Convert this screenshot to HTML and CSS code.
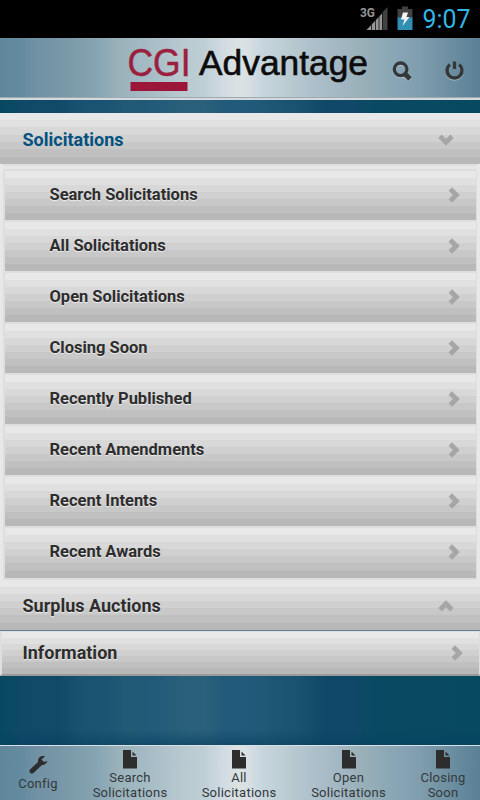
FILE: index.html
```html
<!DOCTYPE html>
<html lang="en">
<head>
<meta charset="utf-8">
<title>CGI Advantage</title>
<link rel="stylesheet" href="styles.css">
</head>
<body>
<svg class="defs" width="0" height="0">
  <symbol id="chev" viewBox="0 0 18 18"><path d="M5.300 3L11.300 9L5.300 15" fill="none" stroke="#a6a6a6" stroke-width="4.900"/></symbol>
  <symbol id="doc" viewBox="0 0 14 19"><path d="M0 0H8V7H14V18.500H0Z" fill="#2d2d2d"/><path d="M9.500 1.500L13.500 5.500H9.500Z" fill="#2d2d2d"/></symbol>
</svg>
<div class="status">
  <svg width="130" height="38" viewBox="350 0 130 38">
    <text x="360" y="17" class="net" textLength="15" lengthAdjust="spacingAndGlyphs">3G</text>
    <path d="M366.500 30L382 13.500V30Z" fill="#969696"/>
    <path d="M382 13L387.500 7V30H382Z" fill="#414141"/>
    <path d="M371.500 22V30M375.500 18V30M379 15V30M382.500 11V30" stroke="#111" stroke-width=".8"/>
    <path d="M402 6.500H408V9H412.500V18H397.500V9H402Z" fill="#414141"/>
    <path d="M397.500 17.500H412.500V30H397.500Z" fill="#308fb3"/>
    <path d="M403 12.500H408L406.500 17H409.500L402.500 26L404.500 19.500H401Z" fill="#f4f4f4"/>
    <text x="422.500" y="28" class="clock" textLength="48" lengthAdjust="spacingAndGlyphs">9:07</text>
  </svg>
</div>
<header class="bar header">
  <svg width="480" height="60" viewBox="0 38 480 60">
    <text x="127.500" y="75.700" class="cgi" textLength="63" lengthAdjust="spacingAndGlyphs">CGI</text>
    <rect x="130.500" y="82" width="57" height="9" fill="#9b1638"/>
    <text x="199" y="75.300" class="adv" textLength="169" lengthAdjust="spacingAndGlyphs">Advantage</text>
    <g fill="none" stroke="#d0d8dc" stroke-opacity=".55" transform="translate(0 1)">
      <circle cx="400.600" cy="69.300" r="6.300" stroke-width="3.300"/><path d="M405 74L410 79" stroke-width="4.800"/>
      <path d="M450 64.600A7.500 7.500 0 1 0 459 64.600" stroke-width="3.500"/>
    </g>
    <g fill="none" stroke="#34383b">
      <circle cx="400.600" cy="69.300" r="6.300" stroke-width="3.300"/><path d="M405 74L410 79" stroke-width="4.800"/>
      <path d="M450 64.600A7.500 7.500 0 1 0 459 64.600" stroke-width="3.500"/><path d="M454.500 61.500V69" stroke-width="3.300"/>
    </g>
  </svg>
</header>
<main>
  <div class="band section open"><span>Solicitations</span><svg class="chev down"><use href="#chev"/></svg></div>
  <div class="panel">
    <div class="band row"><span>Search Solicitations</span><svg class="chev"><use href="#chev"/></svg></div>
    <div class="band row"><span>All Solicitations</span><svg class="chev"><use href="#chev"/></svg></div>
    <div class="band row"><span>Open Solicitations</span><svg class="chev"><use href="#chev"/></svg></div>
    <div class="band row"><span>Closing Soon</span><svg class="chev"><use href="#chev"/></svg></div>
    <div class="band row"><span>Recently Published</span><svg class="chev"><use href="#chev"/></svg></div>
    <div class="band row"><span>Recent Amendments</span><svg class="chev"><use href="#chev"/></svg></div>
    <div class="band row"><span>Recent Intents</span><svg class="chev"><use href="#chev"/></svg></div>
    <div class="band row"><span>Recent Awards</span><svg class="chev"><use href="#chev"/></svg></div>
  </div>
  <div class="band section surplus"><span>Surplus Auctions</span><svg class="chev up"><use href="#chev"/></svg></div>
  <div class="band section info"><span>Information</span><svg class="chev"><use href="#chev"/></svg></div>
</main>
<footer class="bar footer">
  <div class="tab config">
    <svg width="20" height="20" viewBox="0 0 20 20"><path d="M4 16L12 8.500" stroke="#2d2d2d" stroke-width="5" stroke-linecap="round"/><path d="M17 1.500C13 0 9.500 3 10 7C11 11.500 18 11 19.500 6L16 7L13.500 4.500Z" fill="#2d2d2d"/></svg>
    <span>Config</span>
  </div>
  <div class="tab"><svg class="doc"><use href="#doc"/></svg><span>Search<br>Solicitations</span></div>
  <div class="tab"><svg class="doc"><use href="#doc"/></svg><span>All<br>Solicitations</span></div>
  <div class="tab"><svg class="doc"><use href="#doc"/></svg><span>Open<br>Solicitations</span></div>
  <div class="tab"><svg class="doc"><use href="#doc"/></svg><span>Closing<br>Soon</span></div>
</footer>
</body>
</html>
```
FILE: styles.css
```css
* { box-sizing: border-box; }
body {
  margin: 0;
  width: 480px;
  height: 800px;
  overflow: hidden;
  display: flex;
  flex-direction: column;
  font-family: Roboto, sans-serif;
  color: #2d2d2d;
  background:
    linear-gradient(#06416000 0, #06416000 730px, #06416099 745px),
    linear-gradient(90deg, #074961 0, #0a4a63 12px, #104868 22px, #114a69 60px, #175270 80px, #1b5573 112px, #205a74 125px, #225a7a 155px, #285f7a 180px, #2a6079 205px, #225a7a 222px, #205a7a 255px, #1c5572 280px, #175270 300px, #104868 325px, #0f4869 355px, #094a62 375px, #074961 480px);
}
.defs { position: absolute; }
svg { display: block; flex: none; }
.status { height: 38px; background: #000; display: flex; justify-content: flex-end; }
.net { font: bold 12.500px Roboto, sans-serif; fill: #969696; }
.clock { font: 25px Roboto, sans-serif; fill: #33b5e5; }
.bar {
  background: linear-gradient(90deg, #5f8799 0, #658ba0 22px, #7292a4 38px, #7898a8 60px, #829fad 85px, #88a6b5 100px, #9ab2b9 118px, #9fb6c0 132px, #a9bec7 155px, #b7c8cf 180px, #bfcfd5 205px, #d0dae3 222px, #dbe2e1 238px, #d9e0e5 247px, #c7d6de 262px, #bdced4 282px, #afc1cb 310px, #a2b7c3 340px, #99b0b8 362px, #88a6b5 395px, #7f9dac 420px, #7494a5 440px, #698c9f 455px, #5a8196 480px);
}
.header { height: 62px; border-bottom: 2px solid #d5d9db; box-shadow: inset 0 -1px #9aa9b2; }
.cgi { font: 38px "Liberation Sans", sans-serif; fill: #9b1f3e; stroke: #9b1f3e; stroke-width: .5; }
.adv { font: 35px "Liberation Sans", sans-serif; fill: #0c0c0c; stroke: #0c0c0c; stroke-width: .6; }
main { padding-top: 13px; flex: 1; }
.band {
  display: flex;
  align-items: center;
  justify-content: space-between;
  background: linear-gradient(#e8e8e8 14%, #e0e0e0 0 28%, #d8d8d8 0 43%, #d0d0d0 0 57%, #c8c8c8 0 71%, #c0c0c0 0 86%, #b8b8b8 0);
  font-weight: bold;
  text-shadow: 0 1px 1px #eee;
}
.section { height: 51px; padding: 2px 25px 0 22.500px; font-size: 18px; }
.open span { color: #03517f; text-shadow: none; }
.chev { width: 18px; height: 18px; }
.down { transform: rotate(90deg); }
.up { transform: rotate(-90deg); }
.panel {
  padding: 7px 4px 2px 5px;
  display: grid;
  gap: 2px;
  background: linear-gradient(#dedede 2px, #e8e8e8 2px 5px, #dedede 5px);
  box-shadow: inset 3px 0 #e8e8e8, inset -3px 0 #e8e8e8;
}
.row { height: 49px; padding: 0 13px 2px 44.500px; font-size: 16.500px; }
.row span { letter-spacing: -.01px; }
.row:last-child { height: 50px; padding-bottom: 3px; }
.surplus { height: 51px; padding-top: 1px; border-bottom: 1px solid #5d8296; background-clip: padding-box; }
.info {
  height: 45px;
  padding: 0 13px 1px 20.500px;
  border: solid #dedede;
  border-width: 1px 1px 2px 2px;
  border-bottom-color: #9b9b9b;
}
.footer {
  height: 55px;
  border-top: 1px solid #dce0e3;
  display: grid;
  grid-template-columns: 76px 108px 110px 109px 80px;
  font-size: 13px;
  line-height: 15px;
  letter-spacing: .25px;
  text-align: center;
  color: #33393c;
}
.tab { display: flex; flex-direction: column; align-items: center; padding-top: 4px; gap: 1px; }
.config { padding-top: 9px; }
.doc { width: 14px; height: 19px; }
```
